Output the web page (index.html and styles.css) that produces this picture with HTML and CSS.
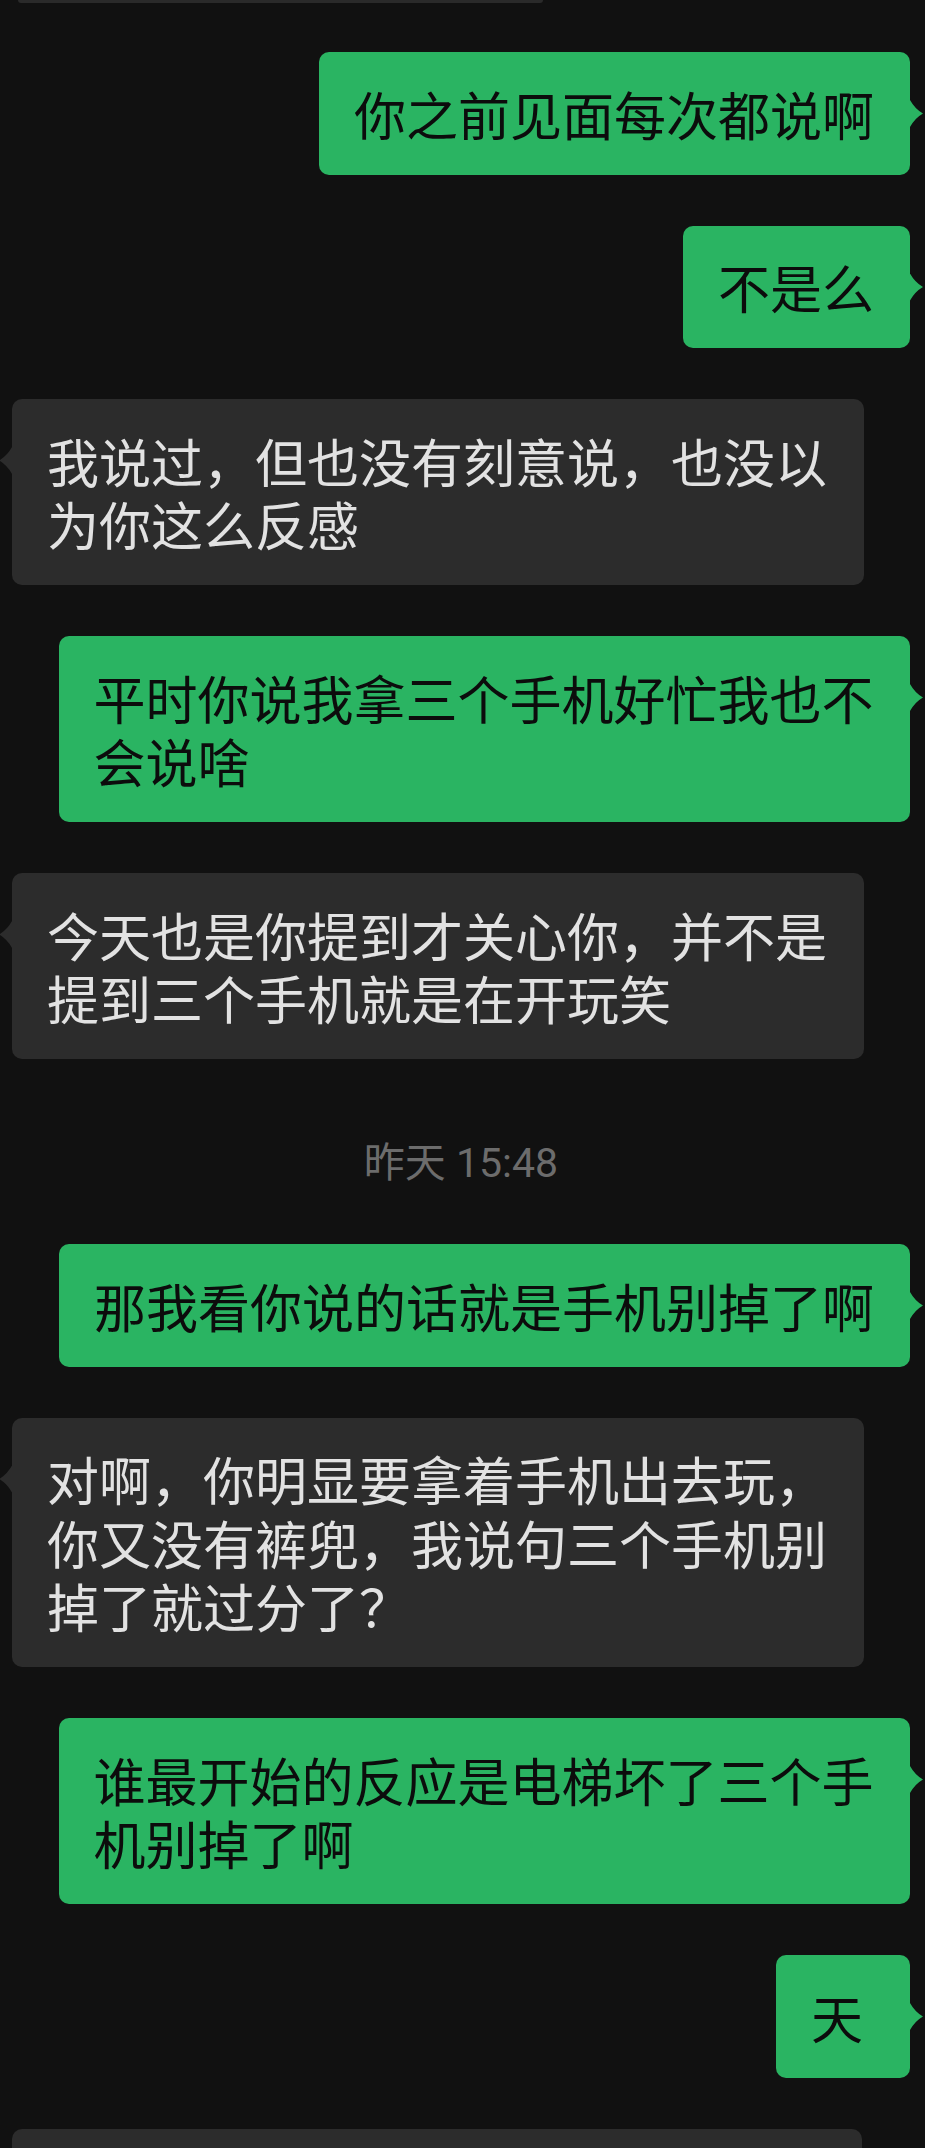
FILE: index.html
```html
<!DOCTYPE html>
<html lang="zh-CN">
<head>
<meta charset="utf-8">
<title>聊天记录</title>
<link rel="stylesheet" href="styles.css">
</head>
<body>
<div class="chat">
  <div class="prev-stub"></div>

  <div class="row me"><div class="bubble me">你之前见面每次都说啊</div></div>
  <div class="row me"><div class="bubble me">不是么</div></div>
  <div class="row them"><div class="bubble them">我说过，但也没有刻意说，也没以为你这么反感</div></div>
  <div class="row me"><div class="bubble me">平时你说我拿三个手机好忙我也不会说啥</div></div>
  <div class="row them"><div class="bubble them">今天也是你提到才关心你，并不是提到三个手机就是在开玩笑</div></div>

  <div class="time">昨天 15:48</div>

  <div class="row me"><div class="bubble me">那我看你说的话就是手机别掉了啊</div></div>
  <div class="row them"><div class="bubble them">对啊，你明显要拿着手机出去玩，你又没有裤兜，我说句三个手机别掉了就过分了？</div></div>
  <div class="row me"><div class="bubble me">谁最开始的反应是电梯坏了三个手机别掉了啊</div></div>
  <div class="row me"><div class="bubble me">天</div></div>
  <div class="row them"><div class="next-stub"></div></div>
</div>
</body>
</html>
```

FILE: styles.css
```css
html, body {
  margin: 0;
  padding: 0;
  background: #111111;
}

.chat {
  display: flex;
  flex-direction: column;
  padding: 0 15px 0 12px;
  font-family: "Noto Sans CJK SC", "Noto Sans", sans-serif;
}

.prev-stub {
  margin-left: 6px;
  width: 525px;
  height: 3px;
  background: #2a2a2a;
  border-radius: 0 0 3px 3px;
  margin-bottom: 49px;
}

.row {
  display: flex;
  margin-bottom: 51px;
}

.row.me {
  justify-content: flex-end;
}

.row.them {
  justify-content: flex-start;
}

.bubble {
  position: relative;
  box-sizing: border-box;
  min-width: 134px;
  max-width: 851.5px;
  padding: 29.5px 36px 29.5px 35px;
  border-radius: 10px;
  font-size: 52px;
  line-height: 63.5px;
  letter-spacing: 0;
  word-break: break-all;
}

.bubble.me {
  background: #2ab462;
  color: #0c0c0c;
}

.bubble.them {
  background: #2c2c2c;
  color: #e2e2e2;
}

.bubble::after {
  content: "";
  position: absolute;
  top: 48px;
  width: 13px;
  height: 27px;
}

.bubble.me::after {
  left: 100%;
  background: #2ab462;
  clip-path: path("M0 0 Q5 9 13 13.5 Q5 18 0 27 Z");
}

.bubble.them::after {
  right: 100%;
  background: #2c2c2c;
  clip-path: path("M13 0 Q8 9 0 13.5 Q8 18 13 27 Z");
}

.time {
  margin-top: 23px;
  margin-bottom: 51px;
  height: 60px;
  line-height: 60px;
  text-align: center;
  font-family: "Roboto", "Noto Sans CJK SC", sans-serif;
  font-size: 41px;
  color: #6c6c6c;
}

.next-stub {
  width: 850px;
  height: 60px;
  background: #2c2c2c;
  border-radius: 10px 10px 0 0;
}
```
